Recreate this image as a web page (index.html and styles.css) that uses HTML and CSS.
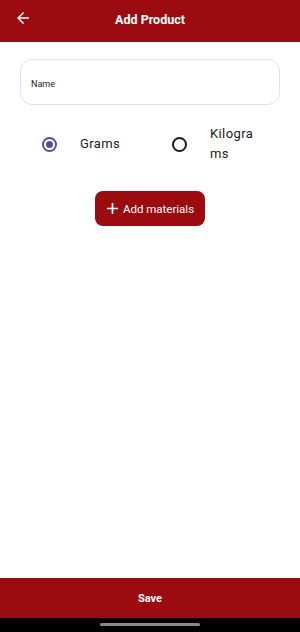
FILE: index.html
```html
<!DOCTYPE html>
<html lang="en">
<head>
  <meta charset="UTF-8">
  <title>Add Product</title>
  <link rel="stylesheet" href="styles.css">
</head>
<body>
  <header class="app-bar">
    <button class="back-btn" aria-label="Back">
      <svg width="18" height="18" viewBox="0 0 24 24"><path d="M20 11H7.83l5.59-5.59L12 4l-8 8 8 8 1.41-1.41L7.83 13H20v-2z" fill="#fff"/></svg>
    </button>
    <h1 class="app-title">Add Product</h1>
  </header>

  <main class="content">
    <div class="field">
      <span class="field-label">Name</span>
    </div>

    <div class="unit-row">
      <label class="unit">
        <span class="radio checked"></span>
        <span class="unit-text">Grams</span>
      </label>
      <label class="unit">
        <span class="radio"></span>
        <span class="unit-text">Kilograms</span>
      </label>
    </div>

    <button class="add-btn">
      <svg width="13" height="13" viewBox="0 0 14 14"><path d="M7 1v12M1 7h12" stroke="#fff" stroke-width="1.8"/></svg>
      <span>Add materials</span>
    </button>
  </main>

  <footer class="save-bar">Save</footer>
  <div class="nav-bar"><span class="pill"></span></div>
</body>
</html>
```

FILE: styles.css
```css
body {
  margin: 0;
  width: 300px;
  height: 632px;
  display: flex;
  flex-direction: column;
  background: #ffffff;
  font-family: Roboto, "Noto Sans", sans-serif;
  overflow: hidden;
}

.app-bar {
  height: 42px;
  flex-shrink: 0;
  background: #9b0b10;
  display: flex;
  align-items: center;
  justify-content: center;
  position: relative;
}

.back-btn {
  position: absolute;
  left: 14px;
  top: 9px;
  border: 0;
  padding: 0;
  background: none;
  display: flex;
}

.app-title {
  margin: 0 0 4px;
  color: #fff;
  font-size: 12.5px;
  font-weight: bold;
}

.content {
  flex: 1;
  padding: 17px 20px 0;
  display: flex;
  flex-direction: column;
  align-items: center;
}

.field {
  box-sizing: border-box;
  width: 260px;
  height: 46px;
  border: 1px solid #e2e2e2;
  border-radius: 12px;
  display: flex;
  align-items: center;
  padding: 3px 0 0 10px;
}

.field-label {
  font-size: 9px;
  color: #222;
}

.unit-row {
  margin-top: 19px;
  width: 260px;
  display: flex;
}

.unit {
  width: 130px;
  display: flex;
  align-items: center;
}

.radio {
  box-sizing: border-box;
  width: 15px;
  height: 15px;
  margin-left: 22px;
  border: 2px solid #1c1c1c;
  border-radius: 50%;
  position: relative;
}

.radio.checked {
  border-color: #5e4a9d;
}

.radio.checked::after {
  content: "";
  position: absolute;
  left: 2px;
  top: 2px;
  width: 7px;
  height: 7px;
  border-radius: 50%;
  background: #5e4a9d;
}

.unit-text {
  margin-left: 23px;
  width: 48px;
  font-size: 13px;
  letter-spacing: 0.4px;
  line-height: 20px;
  color: #1c1c1c;
  word-break: break-all;
}

.add-btn {
  margin-top: 27px;
  width: 110px;
  height: 35px;
  border: 0;
  border-radius: 8px;
  background: #9b0b10;
  color: #fff;
  font-family: Roboto, sans-serif;
  font-size: 11.5px;
  display: flex;
  align-items: center;
  justify-content: center;
  gap: 4px;
  padding: 0;
}

.save-bar {
  height: 40px;
  flex-shrink: 0;
  background: #9b0b10;
  color: #fff;
  font-size: 11px;
  font-weight: bold;
  display: flex;
  align-items: center;
  justify-content: center;
}

.nav-bar {
  height: 14px;
  flex-shrink: 0;
  background: #000;
  display: flex;
  justify-content: center;
  padding-top: 5px;
  box-sizing: border-box;
}

.pill {
  width: 100px;
  height: 3px;
  border-radius: 2px;
  background: #8a8a8a;
}
```
